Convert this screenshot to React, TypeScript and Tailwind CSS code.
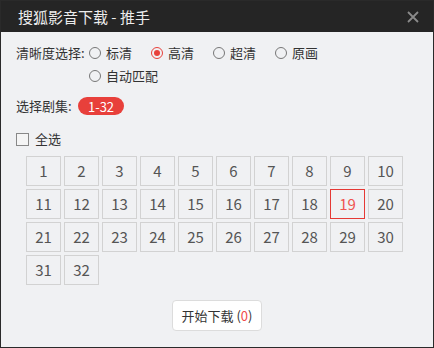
import { useState } from 'react';

const qualities = ['标清', '高清', '超清', '原画', '自动匹配'];
const episodes = Array.from({ length: 32 }, (_, i) => i + 1);

export default function App() {
  const [quality, setQuality] = useState('高清');
  const [current] = useState(19);

  return (
    <div
      className="w-[434px] h-[348px] border border-[#2a2a2a] bg-[#f0f1f3] flex flex-col text-[#333]"
      style={{ fontFamily: '"Noto Sans CJK SC", "Noto Sans", sans-serif' }}
    >
      {/* 标题栏 */}
      <div className="h-[31px] bg-[#252525] flex items-center justify-between pl-[17px] pr-[14px]">
        <span className="text-[15px] text-[#ececec] leading-none">搜狐影音下载 - 推手</span>
        <svg width="12" height="12" viewBox="0 0 12 12" className="mt-[1px]">
          <path d="M1 1L11 11M11 1L1 11" stroke="#8a8a8a" strokeWidth="1.8" />
        </svg>
      </div>

      <div className="flex-1 pl-[15px] pt-[11px] flex flex-col">
        {/* 清晰度 */}
        <div className="flex text-[13px]">
          <div className="w-[73px] h-[20px] leading-[20px]">清晰度选择:</div>
          <div className="w-[260px] flex flex-wrap gap-y-[3px]">
            {qualities.map(q => {
              const on = q === quality;
              return (
                <button
                  key={q}
                  onClick={() => setQuality(q)}
                  className="min-w-[62px] h-[20px] flex items-center gap-[5px] leading-[20px] text-left"
                >
                  <span
                    className={`shrink-0 w-[12px] h-[12px] rounded-full border-[1.5px] flex items-center justify-center ${on ? 'border-[#e8413b]' : 'border-[#777]'}`}
                  >
                    {on && <span className="w-[6px] h-[6px] rounded-full bg-[#e8413b]" />}
                  </span>
                  <span className="whitespace-nowrap">{q}</span>
                </button>
              );
            })}
          </div>
        </div>

        {/* 剧集 */}
        <div className="flex items-center mt-[11px] text-[13px] h-[18px]">
          <div className="w-[62px]">选择剧集:</div>
          <span className="w-[46px] h-[18px] rounded-full bg-[#e8403b] text-white flex items-center justify-center leading-none">1-32</span>
        </div>

        {/* 全选 */}
        <label className="flex items-center gap-[6px] mt-[14px] h-[20px] text-[13px]">
          <span className="shrink-0 w-[13px] h-[13px] border-[1.5px] border-[#888] bg-[#f5f5f5]" />
          全选
        </label>

        <div className="mt-[7px] ml-[10px] grid grid-cols-[repeat(10,35px)] auto-rows-[30px] gap-[3px]">
          {episodes.map(n => (
            <div
              key={n}
              className={`border flex items-center justify-center text-[15px] ${n === current ? 'border-[#e53935] text-[#ef5350]' : 'border-[#d2d2d2] text-[#555]'}`}
            >
              {n}
            </div>
          ))}
        </div>

        <div className="mt-[15px] flex justify-center pr-[15px]">
          <button className="w-[90px] h-[31px] bg-white border border-[#dcdcdc] rounded-[4px] text-[13px] text-[#333]">
            开始下载 (<span className="text-[#f04b4b]">0</span>)
          </button>
        </div>
      </div>
    </div>
  );
}
